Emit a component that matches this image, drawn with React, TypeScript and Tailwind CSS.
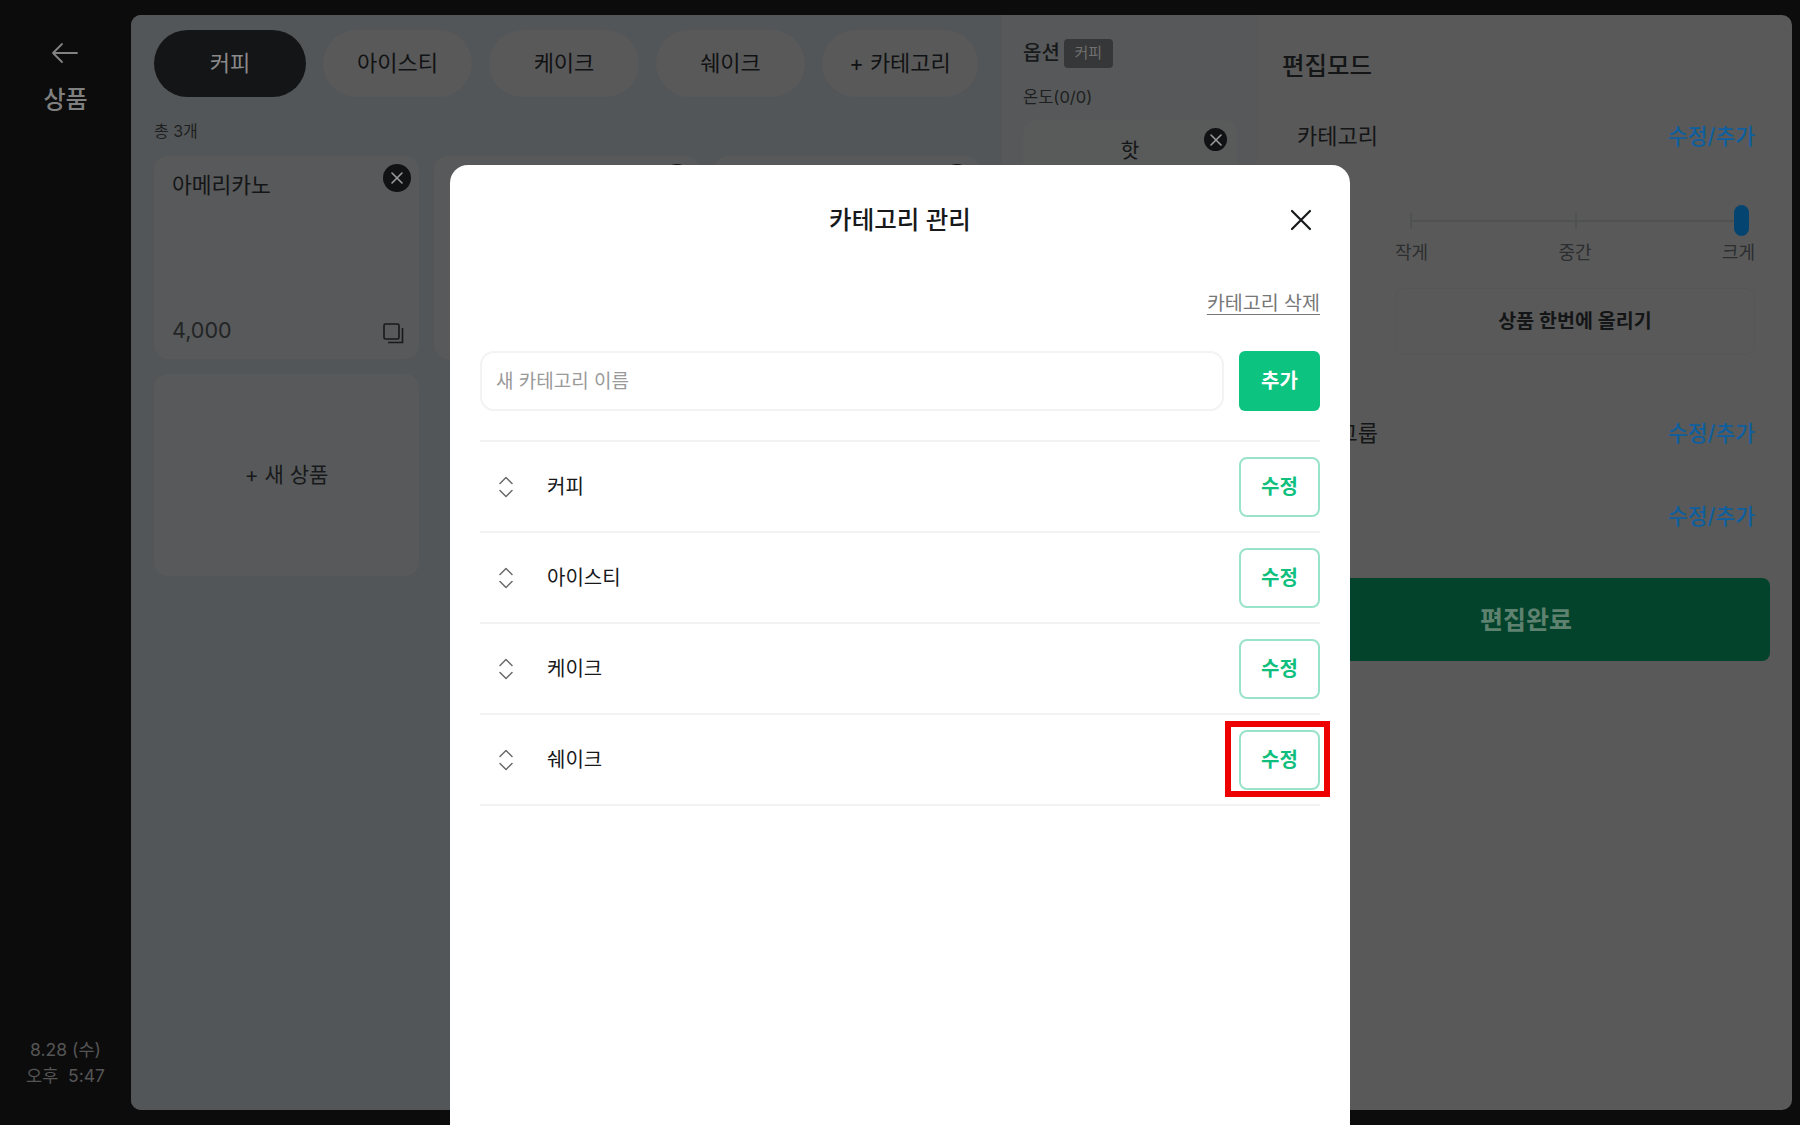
import React from "react";

const font = { fontFamily: 'Inter, "Noto Sans CJK KR", "Noto Sans", sans-serif' };

function CloseDot({ className }: { className: string }) {
  return (
    <span className={`absolute flex items-center justify-center rounded-full bg-[#111213] ${className}`}>
      <svg width="14" height="14" viewBox="0 0 14 14" fill="none" stroke="#9a9a9a" strokeWidth="1.6" strokeLinecap="round">
        <path d="M2 2l10 10M12 2L2 12" />
      </svg>
    </span>
  );
}

function CopyIcon() {
  return (
    <svg className="absolute right-[15px] bottom-[15px]" width="21" height="21" viewBox="0 0 21 21" fill="none" stroke="#17191a" strokeWidth="1.6">
      <rect x="1" y="1" width="15" height="15" rx="1.5" />
      <path d="M19.5 5v14.5H5" />
    </svg>
  );
}

function SortIcon() {
  return (
    <svg width="16" height="22" viewBox="0 0 16 22" fill="none" stroke="#6a6a6a" strokeWidth="1.5" strokeLinecap="round" strokeLinejoin="round">
      <path d="M2 7.5L8 1.5l6 6" />
      <path d="M2 14.5l6 6 6-6" />
    </svg>
  );
}

function EditLink() {
  return <span className="text-[21.5px] font-medium text-[#0d5f9f]">수정/추가</span>;
}

const pills = [
  { t: "아이스티", w: "w-[149px]" },
  { t: "케이크", w: "w-[150px]" },
  { t: "쉐이크", w: "w-[149px]" },
  { t: "+ 카테고리", w: "w-[156px]" },
];

const cats = ["커피", "아이스티", "케이크", "쉐이크"];

export default function App() {
  return (
    <div style={font} className="relative flex h-[1125px] w-[1800px] overflow-hidden bg-[#0c0c0d]">
      <aside className="flex w-[131px] shrink-0 flex-col items-center justify-between pt-[42px] pb-[36px]">
        <div className="flex flex-col items-center gap-[21px]">
          <svg width="28" height="22" viewBox="0 0 28 22" fill="none" stroke="#828282" strokeWidth="1.8" strokeLinecap="round" strokeLinejoin="round">
            <path d="M26 11H2M11 2l-9 9 9 9" />
          </svg>
          <span className="text-[24px] font-medium leading-[30px] text-[#808080]">상품</span>
        </div>
        <div className="flex flex-col items-center text-[17.5px] leading-[26px] text-[#555]">
          <span>8.28 (수)</span>
          <span className="whitespace-pre">오후  5:47</span>
        </div>
      </aside>

      <main className="my-[15px] mr-[8px] flex flex-1 overflow-hidden rounded-[10px] bg-[#595959]">
        <section className="w-[871px] shrink-0 bg-[#535658] pl-[23px] pt-[15px]">
          <div className="flex gap-[17px]">
            <span className="flex h-[67px] w-[152px] items-center justify-center rounded-full bg-[#141517] text-[22px] text-[#8a8a8a]">커피</span>
            {pills.map((p) => (
              <span key={p.t} className={`flex h-[67px] ${p.w} items-center justify-center rounded-full bg-[#59595a] text-[22px] text-[#111213]`}>
                {p.t}
              </span>
            ))}
          </div>
          <p className="mt-[22px] text-[16px] leading-[24px] text-[#1d1f20]">총 3개</p>
          <div className="mt-[13px] grid grid-cols-[265px_265px_265px] gap-x-[15px] gap-y-[15px]">
            {["아메리카노", "", ""].map((n, i) => (
              <div key={i} className="relative flex h-[203px] flex-col justify-between rounded-[14px] bg-[#58595a] px-[18px] pt-[14px] pb-[13px]">
                <span className="text-[21.5px] leading-[30px] text-[#141516]">{n}</span>
                <span className="text-[21.5px] leading-[32px] text-[#222425]">{i === 0 ? "4,000" : ""}</span>
                <CloseDot className="right-[8px] top-[8px] h-[28px] w-[28px]" />
                <CopyIcon />
              </div>
            ))}
            <div className="flex h-[202px] items-center justify-center rounded-[14px] bg-[#58595a] text-[21px] text-[#17191a]">+ 새 상품</div>
          </div>
        </section>

        <section className="w-[256px] shrink-0 bg-[#565859] px-[21px] pt-[23px]">
          <div className="flex items-center gap-[4px]">
            <span className="text-[20px] font-medium text-[#17191a]">옵션</span>
            <span className="flex h-[29px] w-[49px] items-center justify-center rounded-[4px] bg-[#363738] text-[15px] text-[#707070]">커피</span>
          </div>
          <p className="mt-[17px] text-[16.5px] leading-[24px] text-[#1d1f20]">온도(0/0)</p>
          <div className="relative mt-[11px] h-[120px] rounded-[12px] bg-[#595a5a] pt-[17px] text-center text-[20px] leading-[28px] text-[#141516]">
            핫
            <CloseDot className="right-[10px] top-[8px] h-[23px] w-[23px]" />
          </div>
        </section>

        <section className="flex-1 pl-[24px] pr-[22px] pt-[34px]">
          <h2 className="text-[24.5px] font-medium leading-[34px] text-[#141516]">편집모드</h2>
          <div className="ml-[15px] mr-[15px] mt-[37px] flex items-center justify-between leading-[32px]">
            <span className="text-[22px] text-[#141516]">카테고리</span>
            <EditLink />
          </div>
          <div className="ml-[113px] mr-[15px] mt-[53px]">
            <div className="relative mx-[15px] flex h-[32px] items-center">
              <div className="h-[2px] w-full bg-[#505151]" />
              <span className="absolute left-0 top-[8px] h-[16px] w-[2px] bg-[#505151]" />
              <span className="absolute left-1/2 top-[8px] h-[16px] w-[2px] bg-[#505151]" />
              <span className="absolute right-[-9px] top-0 h-[31px] w-[15px] rounded-full bg-[#044470]" />
            </div>
            <div className="mt-[3px] flex justify-between text-[18px] leading-[26px] text-[#2c2e2f]">
              <span>작게</span>
              <span>중간</span>
              <span>크게</span>
            </div>
            <div className="mt-[22px] flex h-[67px] items-center justify-center rounded-[10px] border border-[#555656] text-[19.5px] font-semibold text-[#141516]">
              상품 한번에 올리기
            </div>
          </div>
          <div className="ml-[15px] mr-[15px] mt-[62px] flex items-center justify-between leading-[32px]">
            <span className="text-[22px] text-[#141516]">옵션그룹</span>
            <EditLink />
          </div>
          <div className="ml-[15px] mr-[15px] mt-[51px] flex items-center justify-between leading-[32px]">
            <span className="text-[22px] text-[#141516]">옵션</span>
            <EditLink />
          </div>
          <div className="mt-[46px] flex h-[83px] items-center justify-center rounded-[8px] bg-[#04432b] pt-[2px] text-[25px] font-semibold text-[#5f8270]">
            편집완료
          </div>
        </section>
      </main>

      <div className="absolute bottom-0 left-[450px] top-[165px] w-[900px] rounded-t-[18px] bg-white px-[30px]">
        <div className="relative flex h-[109px] items-center justify-center pt-[2px]">
          <h1 className="text-[24.5px] font-medium text-[#17181a]">카테고리 관리</h1>
          <svg className="absolute right-[8px] top-[44px]" width="22" height="22" viewBox="0 0 22 22" fill="none" stroke="#17181a" strokeWidth="2.2" strokeLinecap="round">
            <path d="M2 2l18 18M20 2L2 20" />
          </svg>
        </div>
        <div className="mt-[15px] flex justify-end">
          <span className="text-[19.5px] leading-[28px] text-[#777] underline underline-offset-4">카테고리 삭제</span>
        </div>
        <div className="mt-[34px] flex gap-[15px]">
          <div className="flex h-[60px] flex-1 items-center rounded-[14px] border-2 border-[#f3f3f3] px-[14px] pt-[2px] text-[19px] text-[#9a9a9a]">새 카테고리 이름</div>
          <button className="h-[60px] w-[81px] rounded-[6px] bg-[#0cc37f] text-[20px] font-semibold text-white">추가</button>
        </div>
        <ul className="mt-[29px] border-t-2 border-[#f3f3f3]">
          {cats.map((c) => (
            <li key={c} className="flex h-[91px] items-center border-b-2 border-[#f3f3f3] pl-[18px]">
              <SortIcon />
              <span className="ml-[33px] flex-1 pt-[1px] text-[20px] text-[#17181a]">{c}</span>
              <button className="h-[60px] w-[81px] rounded-[8px] border-2 border-[#9ae3ca] text-[20px] font-semibold text-[#10bf7e]">수정</button>
            </li>
          ))}
        </ul>
        <div className="absolute left-[775px] top-[556px] h-[76px] w-[105px] border-[6px] border-[#ee0000]" />
      </div>
    </div>
  );
}
